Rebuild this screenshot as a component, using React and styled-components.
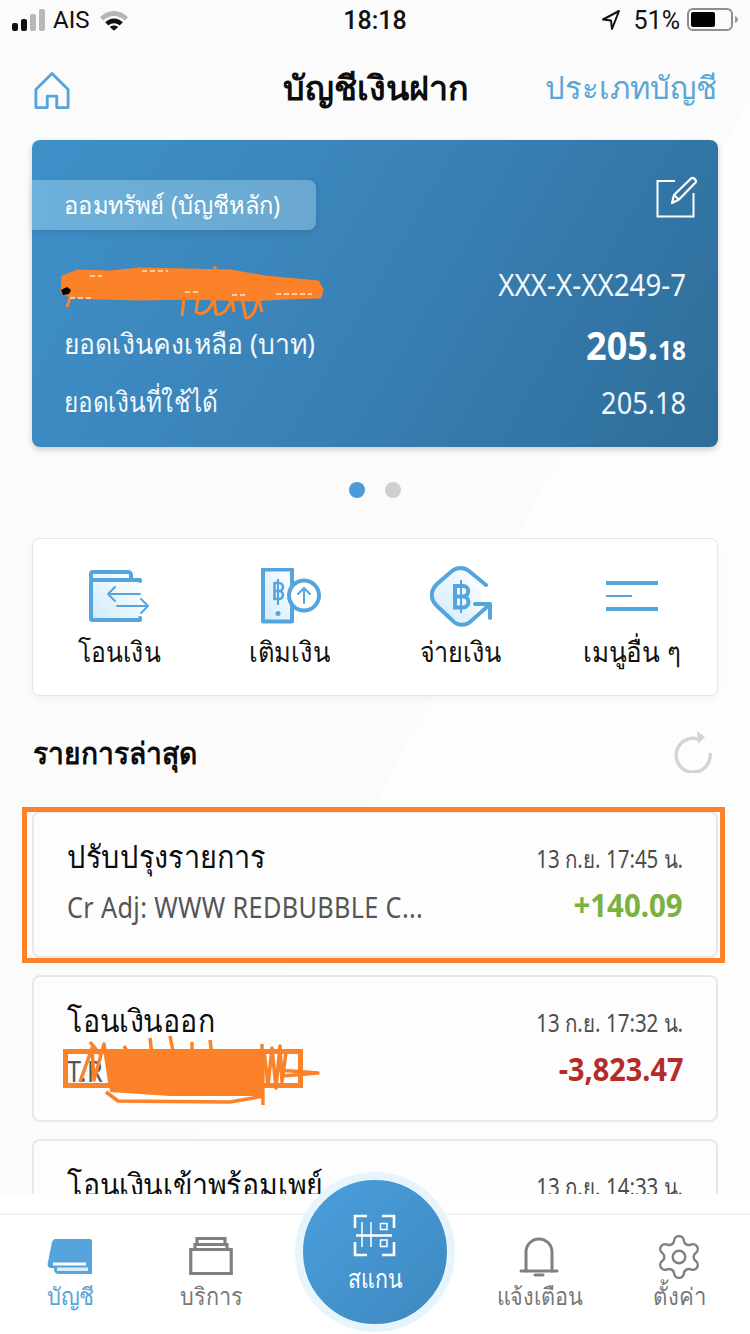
import React from "react";
import styled, { createGlobalStyle } from "styled-components";
import { Settings } from "lucide-react";

const BLUE = "#55a5dc";
const ORANGE = "#fb8228";
const Global = createGlobalStyle`
  html, body { margin: 0; padding: 0; background: #fbfbfb; }
  body { font-family: "Noto Sans", "DejaVu Sans", sans-serif; }
`;

const Cond = styled.span`
  display: inline-block; white-space: nowrap;
  transform: scaleX(${p => p.$k});
  transform-origin: ${p => p.$o || "left"} center;
`;

const Page = styled.div`
  position: relative; width: 750px; height: 1334px; overflow: hidden;
  display: flex; flex-direction: column;
  background: linear-gradient(118deg, #fbfbfb 0 55%, #fdfdfd 55% 100%);
`;
const StatusBar = styled.div`
  height: 40px; flex: none; display: grid; grid-template-columns: 1fr auto 1fr; align-items: center;
  padding: 0 12px; color: #111; font: 400 24px Roboto, sans-serif;
`;
const StatusLeft = styled.div`display: flex; align-items: center; gap: 5px; svg:last-child { margin-left: 6px; }`;
const StatusRight = styled.div`display: flex; align-items: center; justify-content: flex-end; gap: 7px; svg:first-child { margin-right: 6px; }`;
const StatusPct = styled.span`font-size: 25px;`;
const Clock = styled.div`font-size: 25px; font-weight: 500;`;

const Header = styled.header`
  height: 100px; flex: none; box-sizing: border-box; padding: 0 33px 0 34px;
  display: grid; grid-template-columns: 1fr auto 1fr; align-items: center;
`;
const HeaderTitle = styled.h1`margin: 0 0 4px; font-size: 34px; font-weight: 700; color: #0c0c0c;`;
const HeaderLink = styled.div`justify-self: end; margin-bottom: 4px; font-size: 31px; color: #5aa7d6;`;

const AccountCard = styled.section`
  flex: none; height: 307px; box-sizing: border-box; margin: 0 32px; padding: 40px 32px 0 33px;
  position: relative; border-radius: 8px; color: #fff;
  background: linear-gradient(120deg, #3f90c9 0%, #3a83b8 45%, #2e6d99 100%);
  box-shadow: 0 3px 6px rgba(0,0,0,.18);
`;
const CardTop = styled.div`display: flex; justify-content: space-between; height: 50px; margin-bottom: 27px;`;
const Pill = styled.div`
  margin-left: -33px; width: 284px; box-sizing: border-box; height: 50px; padding-left: 32px;
  display: flex; align-items: center; font-size: 25px; border-radius: 0 8px 8px 0;
  background: linear-gradient(90deg, #6cb1da, #6ba8d0);
  box-shadow: 0 3px 6px rgba(0,0,0,.1);
`;
const EditWrap = styled.div`margin: -5px -13px 0 0; svg { display: block; }`;
const CardRow = styled.div`
  height: 58px; box-sizing: border-box; padding-bottom: ${p => p.$lift || 0}px;
  display: flex; justify-content: space-between; align-items: center;
  font-size: ${p => p.$size || 28}px; color: #f2f7fb;
`;
const CardLabel = styled.span`font-size: 28px; margin-left: -1px;`;
const Balance = styled.span`font-size: 40px; font-weight: 700; color: #fff; small { font-size: 27px; }`;

const NameMark = styled.svg`position: absolute; left: 18px; top: 120px; pointer-events: none;`;
const RefMark = styled.svg`position: absolute; left: 26px; top: 53px; pointer-events: none;`;

const Dots = styled.div`flex: none; height: 91px; box-sizing: border-box; padding-bottom: 6px; display: flex; align-items: center; justify-content: center; gap: 20px;`;
const Dot = styled.span`width: 16px; height: 16px; border-radius: 50%; background: ${p => p.$on ? "#4a9bd8" : "#cfcfcf"};`;

const ActionPanel = styled.nav`
  flex: none; height: 158px; box-sizing: border-box; margin: 0 32px;
  display: grid; grid-template-columns: repeat(4, 1fr);
  background: #fff; border: 1px solid #e6e6e6; border-radius: 8px; box-shadow: 0 3px 6px rgba(0,0,0,.04);
`;
const Action = styled.div`display: flex; flex-direction: column; align-items: center; color: #111; font-size: 28px;`;
const ActionIcon = styled.div`height: 91px; width: 100%; display: flex; align-items: center; justify-content: center; padding-top: 24px; box-sizing: border-box;`;

const SectionHead = styled.div`
  flex: none; height: 106px; box-sizing: border-box; padding: 8px 36px 0 33px;
  display: flex; align-items: center; justify-content: space-between;
  svg { margin-top: -2px; }
`;
const SectionTitle = styled.h2`margin: 0; font-size: 30px; font-weight: 700; color: #0c0c0c;`;

const TxList = styled.div`
  flex: none; height: 392px; box-sizing: border-box; overflow: hidden; padding: 9px 32px 0;
  display: flex; flex-direction: column; gap: 17px;
`;
const TxRow = styled.article`
  position: relative; flex: none; height: 147px; box-sizing: border-box; padding: ${p => p.$top}px 33px 0;
  border: 2px solid #e8e8e8; border-radius: 8px; background: #fdfdfd;
`;
const MarkFrame = styled.div`
  position: absolute; left: -12px; right: -9px; top: -6px; bottom: -7px;
  border: 5px solid ${ORANGE}; pointer-events: none;
`;
const TxLine = styled.div`display: flex; justify-content: space-between; align-items: center; height: 48px;`;
const TxTitle = styled.div`font-size: 31px; color: #0c0c0c;`;
const TxDate = styled.div`font-size: 25px; color: #4d4d4d; margin-top: 4px;`;
const TxSub = styled.div`font-size: 29px; color: #555; letter-spacing: .4px; margin-top: 2px;`;
const TxAmount = styled.div`font-size: 33px; font-weight: 700; color: ${p => p.$color}; margin-bottom: 2px;`;

const TabBar = styled.footer`
  flex: 1; box-sizing: border-box; padding-top: 19px; background: #fff; position: relative;
`;
const TabRow = styled.div`
  height: 100%; border-top: 2px solid #f2f2f2; box-sizing: border-box; padding: 20px 0 0;
  display: grid; grid-template-columns: 140px 142px 186px 142px 138px 2px;
`;
const Tab = styled.div`
  display: flex; flex-direction: column; align-items: center;
  font-size: 24px; line-height: 34px; color: ${p => p.$on ? "#58a5d8" : "#777"};
`;
const TabIcon = styled.div`height: 44px; display: flex; align-items: center; justify-content: center; svg { display: block; }`;
const ScanRing = styled.div`
  position: absolute; left: 295px; top: -22px; width: 160px; height: 160px; box-sizing: border-box;
  border-radius: 50%; border: 8px solid #e6f4fb;
  background: linear-gradient(135deg, #4a9fdc, #3e88c0);
  display: flex; flex-direction: column; align-items: center; color: #fff;
  font-size: 26px; line-height: 40px; padding-top: 34px;
  svg { display: block; }
`;

const grad = (id) => (
  <defs>
    <linearGradient id={id} x1="0" y1="1" x2="1" y2="0">
      <stop offset="0" stopColor="#cfeafb" />
      <stop offset="1" stopColor="#ffffff" />
    </linearGradient>
  </defs>
);

const Signal = () => (
  <svg width="36" height="24" viewBox="0 0 36 24">
    <rect x="0" y="15" width="6" height="8" rx="2" fill="#111" />
    <rect x="9" y="11" width="6" height="12" rx="2" fill="#111" />
    <rect x="18" y="6" width="6" height="17" rx="2" fill="#b8b8b8" />
    <rect x="27" y="1" width="6" height="22" rx="2" fill="#b8b8b8" />
  </svg>
);
const Wifi = () => (
  <svg width="28" height="21" viewBox="0 0 30 22">
    <path d="M0 7.500C8.500 -1.500 21.500 -1.500 30 7.500L26.500 11C20 4.500 10 4.500 3.500 11Z" fill="#b5b5b5" />
    <path d="M5.500 13C11 7.500 19 7.500 24.500 13L21 16.300C17.500 13 12.500 13 9 16.300Z" fill="#111" />
    <path d="M10.500 18C13 15.800 17 15.800 19.500 18L15 22Z" fill="#111" />
  </svg>
);
const Locate = () => (
  <svg width="20" height="22" viewBox="0 0 20 22" fill="none" stroke="#111" strokeWidth="2" strokeLinejoin="round">
    <path d="M18 2L2 10.500L10 11.500L11 20Z" />
  </svg>
);
const Battery = () => (
  <svg width="51" height="24" viewBox="0 0 51 24">
    <rect x="1" y="1" width="44" height="21" rx="5" fill="none" stroke="#8e8e8e" strokeWidth="2" />
    <rect x="4" y="4" width="24" height="15" rx="2" fill="#000" />
    <path d="M48 8c2 1 3 2 3 3.500s-1 2.500-3 3.500z" fill="#9a9a9a" />
  </svg>
);
const HomeIcon = () => (
  <svg width="36" height="39" viewBox="0 0 38 40" fill="none" stroke={BLUE} strokeWidth="3" strokeLinejoin="round">
    <path d="M19 2L2 19V38H14V26H24V38H36V19Z" />
  </svg>
);
const EditIcon = () => (
  <svg width="44" height="44" viewBox="0 0 44 44" fill="none" stroke="#fff" strokeWidth="2">
    <path d="M20 6H2.500V41.500H38.500V18" />
    <path d="M17 28L19 20L36 3.500C38 2 41.500 4.500 41 7L24 24.500Z" strokeWidth="2.200" strokeLinejoin="round" />
    <path d="M19 20L24 24.500" />
  </svg>
);
const TransferIcon = () => (
  <svg width="60" height="54" viewBox="0 0 60 54" fill="none">
    {grad("g1")}
    <path d="M2 3H50V50H2Z" fill="url(#g1)" />
    <g stroke={BLUE} strokeWidth="4" strokeLinecap="round" strokeLinejoin="round">
      <path d="M2 12V49a1 1 0 0 0 1 1H51V48M51 11V10H2V4a2 2 0 0 1 2-2H39a3 3 0 0 1 3 3V10H51" />
    </g>
    <g stroke={BLUE} strokeWidth="2" strokeLinecap="round" strokeLinejoin="round">
      <path d="M51 24H20M26 17L19 24L26 31" />
      <path d="M28 36H59M52 29L59 36L52 43" />
    </g>
  </svg>
);
const TopUpIcon = () => (
  <svg width="62" height="58" viewBox="0 0 62 58" fill="none">
    {grad("g2")}
    <path d="M4 1.500H33V53.500H4Z" fill="url(#g2)" stroke={BLUE} strokeWidth="4" strokeLinejoin="round" />
    <circle cx="45" cy="27.500" r="15" fill="#fff" stroke={BLUE} strokeWidth="4" />
    <path d="M45 35V20M39 26L45 20L51 26" stroke={BLUE} strokeWidth="2" strokeLinecap="round" strokeLinejoin="round" />
    <circle cx="19" cy="45.500" r="2.500" fill={BLUE} />
    <path d="M19 11V37" stroke={BLUE} strokeWidth="2" />
    <path d="M15.500 15H20a3.500 3.500 0 0 1 0 8a3.500 3.500 0 0 1 0 8H15.500ZM15.500 23H20" stroke={BLUE} strokeWidth="2.600" />
  </svg>
);
const PayIcon = () => (
  <svg width="62" height="62" viewBox="0 0 62 62" fill="none">
    {grad("g3")}
    <path d="M48 12L39 5C34 1 27 1 22 5L7 18C0 25 0 33 7 40L22 54C27 60 35 60 40 56L52 38Z" fill="url(#g3)" />
    <path d="M56 19L39 5C34 1 27 1 22 5L7 18C0 25 0 33 7 40L22 54C27 60 35 60 40 56L58 40" stroke={BLUE} strokeWidth="4" strokeLinecap="round" />
    <path d="M45 38H60V52" stroke={BLUE} strokeWidth="4" strokeLinecap="round" strokeLinejoin="round" />
    <path d="M31 14V47" stroke={BLUE} strokeWidth="2" />
    <path d="M25 20H33a5 5 0 0 1 0 10.500a5.500 5.500 0 0 1 0 11H25ZM25 30.500H33" stroke={BLUE} strokeWidth="4" />
  </svg>
);
const MenuIcon = () => (
  <svg width="54" height="32" viewBox="0 0 54 32">
    <rect x="1" y="0" width="52" height="4" fill={BLUE} />
    <rect x="1" y="14" width="26" height="2" fill={BLUE} />
    <rect x="1" y="26" width="52" height="4" fill={BLUE} />
  </svg>
);
const RefreshIcon = () => (
  <svg width="40" height="42" viewBox="0 0 40 42" fill="none" stroke="#d4d4d4" strokeWidth="3.500">
    <path d="M24 8A17 17 0 1 0 36 22" />
    <path d="M23 0L31 6L24 13Z" fill="#d4d4d4" stroke="none" />
  </svg>
);
const BookIcon = () => (
  <svg width="48" height="40" viewBox="0 0 48 40">
    <path d="M9 2H44a2 2 0 0 1 2 2V37H13a5 5 0 0 1-5-4V31H5C2 31 1 28 2 25L6 5C7 3 8 2 9 2Z" fill={BLUE} />
    <path d="M7 27H40" stroke="#fff" strokeWidth="3" />
    <path d="M11 30.500H42V34H11Z" fill="#dceef9" />
  </svg>
);
const ServiceIcon = () => (
  <svg width="46" height="42" viewBox="0 0 46 42" fill="none" stroke="#808080" strokeWidth="3.200">
    <path d="M2.750 13.500H43.250V37.500H2.750Z" fill="#fff" />
    <path d="M7 13V8.500H39V13M9 8V2.500H37V8" />
  </svg>
);
const BellIcon = () => (
  <svg width="40" height="40" viewBox="0 0 40 40" fill="none" stroke="#808080" strokeWidth="3" strokeLinecap="round">
    <path d="M7 34V15a13 13 0 0 1 26 0V34" />
    <path d="M2 34H38" />
    <path d="M16 38H24" />
  </svg>
);
const ScanIcon = () => (
  <svg width="44" height="44" viewBox="0 0 44 44" fill="none" stroke="#fff">
    <g strokeWidth="2.600">
      <path d="M14 2H2V14M29 2H41V14M2 28V41H14M41 28V41H29" />
    </g>
    <path d="M3 21.500H39" strokeWidth="2.600" />
    <path d="M9 8V33M18 8V33" strokeWidth="1.500" />
    <rect x="27.500" y="9.500" width="6.500" height="6" strokeWidth="1.500" />
    <rect x="27.500" y="26" width="6.500" height="6.500" strokeWidth="1.500" />
  </svg>
);

const NameScribble = () => (
  <NameMark width="290" height="62" viewBox="0 0 290 62">
    <path d="M13 17L28 11L60 12L90 9L180 11L215 17L268 22L272 30L270 37L235 38L200 40L140 38L90 39L50 38L22 37L12 32Z" fill={ORANGE} stroke={ORANGE} strokeWidth="3" strokeLinejoin="round" />
    <path d="M165 16V6M134 38L132 56M148 38L146 52C152 56 160 52 164 38L166 54C172 56 178 50 182 38L184 52M192 38L196 58C202 58 206 50 208 38L212 52M20 38L17 47" fill="none" stroke={ORANGE} strokeWidth="3" strokeLinejoin="round" />
    <path d="M20 38H44M135 32H150M182 35H198M226 34H262M40 16H52M92 11H118" stroke="#fff" strokeWidth="1.500" strokeDasharray="5 3" opacity=".8" />
    <path d="M11 30L17 27L21 30L19 34L13 35Z" fill="#000" />
  </NameMark>
);
const RefScribble = () => (
  <RefMark width="270" height="80" viewBox="0 0 270 80">
    <rect x="5.500" y="21.500" width="235" height="34" fill="none" stroke={ORANGE} strokeWidth="5" />
    <path d="M46 22H205L204 66L110 66L50 62Z" fill={ORANGE} />
    <path d="M20 52L32 18L34 50L44 14L50 54M204 20L208 56L212 18L216 58L220 16L222 52L226 22M218 40L258 43L222 46" stroke={ORANGE} strokeWidth="3.500" fill="none" strokeLinejoin="round" />
    <path d="M46 62L58 71L170 72L204 66M202 14L203 75M90 8L92 26M110 6L114 26M30 12L40 24M150 10L152 26M64 16L70 26M132 12L132 26" stroke={ORANGE} strokeWidth="3.500" fill="none" />
  </RefMark>
);

export default function App() {
  return (
    <Page>
      <Global />
      <StatusBar>
        <StatusLeft><Signal /><span>AIS</span><Wifi /></StatusLeft>
        <Clock>18:18</Clock>
        <StatusRight><Locate /><StatusPct>51%</StatusPct><Battery /></StatusRight>
      </StatusBar>
      <Header>
        <HomeIcon />
        <HeaderTitle>บัญชีเงินฝาก</HeaderTitle>
        <HeaderLink>ประเภทบัญชี</HeaderLink>
      </Header>
      <AccountCard>
        <CardTop>
          <Pill><Cond $k={0.95}>ออมทรัพย์ (บัญชีหลัก)</Cond></Pill>
          <EditWrap><EditIcon /></EditWrap>
        </CardTop>
        <CardRow $size={30} $lift={4}><span /><Cond $k={0.925} $o="right">XXX-X-XX249-7</Cond></CardRow>
        <CardRow>
          <CardLabel><Cond $k={0.947}>ยอดเงินคงเหลือ (บาท)</Cond></CardLabel>
          <Balance><Cond $k={0.9} $o="right">205.<small>18</small></Cond></Balance>
        </CardRow>
        <CardRow $size={31}>
          <CardLabel><Cond $k={0.87}>ยอดเงินที่ใช้ได้</Cond></CardLabel>
          <Cond $k={0.875} $o="right">205.18</Cond>
        </CardRow>
        <NameScribble />
      </AccountCard>
      <Dots><Dot $on /><Dot /></Dots>
      <ActionPanel>
        <Action><ActionIcon><TransferIcon /></ActionIcon><Cond $k={0.88} $o="center">โอนเงิน</Cond></Action>
        <Action><ActionIcon><TopUpIcon /></ActionIcon><Cond $k={0.91} $o="center">เติมเงิน</Cond></Action>
        <Action><ActionIcon><PayIcon /></ActionIcon><Cond $k={0.9} $o="center">จ่ายเงิน</Cond></Action>
        <Action><ActionIcon><MenuIcon /></ActionIcon><Cond $k={0.93} $o="center">เมนูอื่น ๆ</Cond></Action>
      </ActionPanel>
      <SectionHead>
        <SectionTitle><Cond $k={0.94}>รายการล่าสุด</Cond></SectionTitle>
        <RefreshIcon />
      </SectionHead>
      <TxList>
        <TxRow $top={20}>
          <TxLine>
            <TxTitle><Cond $k={0.93}>ปรับปรุงรายการ</Cond></TxTitle>
            <TxDate><Cond $k={0.82} $o="right">13 ก.ย. 17:45 น.</Cond></TxDate>
          </TxLine>
          <TxLine>
            <TxSub><Cond $k={0.87}>Cr Adj: WWW REDBUBBLE C...</Cond></TxSub>
            <TxAmount $color="#7ab23f"><Cond $k={0.89} $o="right">+140.09</Cond></TxAmount>
          </TxLine>
          <MarkFrame />
        </TxRow>
        <TxRow $top={20}>
          <TxLine>
            <TxTitle><Cond $k={0.92}>โอนเงินออก</Cond></TxTitle>
            <TxDate><Cond $k={0.82} $o="right">13 ก.ย. 17:32 น.</Cond></TxDate>
          </TxLine>
          <TxLine>
            <TxSub><Cond $k={0.87}>T.R</Cond></TxSub>
            <TxAmount $color="#b52b27"><Cond $k={0.875} $o="right">-3,823.47</Cond></TxAmount>
          </TxLine>
          <RefScribble />
        </TxRow>
        <TxRow $top={20}>
          <TxLine>
            <TxTitle><Cond $k={0.92}>โอนเงินเข้าพร้อมเพย์</Cond></TxTitle>
            <TxDate><Cond $k={0.82} $o="right">13 ก.ย. 14:33 น.</Cond></TxDate>
          </TxLine>
        </TxRow>
      </TxList>
      <TabBar>
        <TabRow>
          <Tab $on><TabIcon><BookIcon /></TabIcon><Cond $k={0.92} $o="center">บัญชี</Cond></Tab>
          <Tab><TabIcon><ServiceIcon /></TabIcon><Cond $k={0.9} $o="center">บริการ</Cond></Tab>
          <span />
          <Tab><TabIcon><BellIcon /></TabIcon><Cond $k={0.9} $o="center">แจ้งเตือน</Cond></Tab>
          <Tab>
            <TabIcon><Settings width={44} height={44} viewBox="1.500 1.500 21 21" strokeWidth={1.15} color="#808080" /></TabIcon>
            <Cond $k={0.92} $o="center">ตั้งค่า</Cond>
          </Tab>
        </TabRow>
        <ScanRing><ScanIcon /><Cond $k={0.82} $o="center">สแกน</Cond></ScanRing>
      </TabBar>
    </Page>
  );
}
